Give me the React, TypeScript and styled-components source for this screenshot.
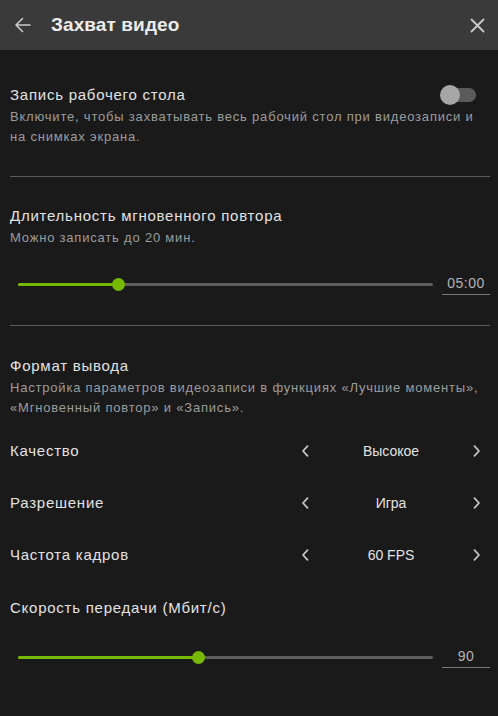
import styled, { createGlobalStyle } from "styled-components";

const GlobalStyle = createGlobalStyle`
  html, body {
    margin: 0;
    padding: 0;
    background: #1a1a1a;
  }
  body {
    font-family: "Liberation Sans", Arial, sans-serif;
    color: #e2e2e2;
  }
  * { box-sizing: border-box; }
`;

const Page = styled.div`
  width: 498px;
  height: 716px;
  background: #1a1a1a;
  overflow: hidden;
`;

const Header = styled.header`
  height: 50px;
  background: #3a3a3a;
  display: flex;
  align-items: center;
  padding: 0 13px 0 14px;
`;

const IconButton = styled.button`
  background: none;
  border: 0;
  padding: 0;
  display: flex;
  align-items: center;
  justify-content: center;
  color: #c9c9c9;
  cursor: pointer;
`;

const Title = styled.h1`
  flex: 1;
  margin: 0 0 0 20px;
  font-size: 19px;
  font-weight: 700;
  color: #ececec;
  letter-spacing: 0.1px;
`;

const Content = styled.main`
  padding: 5px 8px 0 10px;
`;

const Section = styled.section<{ $divider?: boolean; $top?: number }>`
  padding: ${(p) => p.$top ?? 29}px 0 ${(p) => (p.$divider ? "29px" : "0")};
  border-bottom: ${(p) => (p.$divider ? "1px solid #5c5c5c" : "none")};
`;

const HeadRow = styled.div`
  display: flex;
  align-items: center;
  justify-content: space-between;
`;

const Label = styled.div<{ $top?: number }>`
  margin-top: ${(p) => p.$top ?? 0}px;
  font-size: 15px;
  line-height: 20px;
  letter-spacing: 0.75px;
  color: #e2e2e2;
`;

const Description = styled.p`
  margin: 2px 0 0;
  font-size: 13px;
  line-height: 20px;
  letter-spacing: 0.8px;
  color: #9c9c9c;
`;

const Toggle = styled.div`
  position: relative;
  width: 36px;
  height: 20px;
  margin-right: 14px;
  margin-top: 1px;
  &::before {
    content: "";
    position: absolute;
    left: 10px;
    right: 0;
    top: 3px;
    height: 14px;
    border-radius: 7px;
    background: #5a5a5a;
  }
  &::after {
    content: "";
    position: absolute;
    left: 0;
    top: 0;
    width: 20px;
    height: 20px;
    border-radius: 50%;
    background: #a6a6a6;
  }
`;

const SliderRow = styled.div<{ $top: number }>`
  display: flex;
  align-items: center;
  height: 24px;
  margin-top: ${(p) => p.$top}px;
  padding-left: 8px;
`;

const Track = styled.div`
  position: relative;
  flex: 1;
  height: 3px;
  background: #5e5e5e;
  border-radius: 2px;
`;

const Fill = styled.div`
  position: absolute;
  left: 0;
  top: 0;
  bottom: 0;
  background: #76b900;
  border-radius: 2px;
`;

const Thumb = styled.div`
  position: absolute;
  top: 50%;
  width: 13px;
  height: 13px;
  margin: -6.5px 0 0 -6.5px;
  border-radius: 50%;
  background: #76b900;
`;

const ValueBox = styled.div`
  width: 48px;
  margin-left: 9px;
  height: 24px;
  line-height: 24px;
  text-align: center;
  font-size: 14px;
  letter-spacing: 0.5px;
  color: #b4b4b4;
  border-bottom: 1px solid #7a7a7a;
  transform: translateY(-1px);
`;

const OptionList = styled.div`
  margin-top: 7px;
`;

const OptionRow = styled.div`
  display: flex;
  align-items: center;
  justify-content: space-between;
  height: 52px;
`;

const Selector = styled.div`
  display: grid;
  grid-template-columns: 16px 1fr 16px;
  align-items: center;
  width: 188px;
  margin-right: 5px;
`;

const Arrow = styled.button`
  background: none;
  border: 0;
  padding: 0;
  height: 20px;
  display: flex;
  align-items: center;
  justify-content: center;
  color: #c4c4c4;
`;

const SelectValue = styled.span`
  text-align: center;
  font-size: 14px;
  color: #e2e2e2;
`;

const Chevron = ({ dir }: { dir: "left" | "right" }) => (
  <svg width="8" height="12" viewBox="0 0 8 12" fill="none">
    <path
      d={dir === "left" ? "M6.5 1.2 2 6l4.5 4.8" : "M1.5 1.2 6 6l-4.5 4.8"}
      stroke="currentColor"
      strokeWidth="1.8"
      strokeLinecap="round"
      strokeLinejoin="round"
    />
  </svg>
);

const Slider = ({ value, fraction, top }: { value: string; fraction: number; top: number }) => (
  <SliderRow $top={top}>
    <Track>
      <Fill style={{ width: `${fraction * 100}%` }} />
      <Thumb style={{ left: `${fraction * 100}%` }} />
    </Track>
    <ValueBox>{value}</ValueBox>
  </SliderRow>
);

const options = [
  { label: "Качество", value: "Высокое" },
  { label: "Разрешение", value: "Игра" },
  { label: "Частота кадров", value: "60 FPS" },
];

// неразрывный пробел после предлога, как в оригинале перенос идёт перед «на»
const desktopHint =
  "Включите, чтобы захватывать весь рабочий стол при видеозаписи и на\u00a0снимках экрана.";

export default function App() {
  return (
    <Page>
      <GlobalStyle />
      <Header>
        <IconButton aria-label="Назад">
          <svg width="17" height="16" viewBox="0 0 17 16" fill="none">
            <path
              d="M16 8H2M8.5 1.5 2 8l6.5 6.5"
              stroke="currentColor"
              strokeWidth="1.6"
              strokeLinecap="round"
              strokeLinejoin="round"
            />
          </svg>
        </IconButton>
        <Title>Захват видео</Title>
        <IconButton aria-label="Закрыть">
          <svg width="15" height="15" viewBox="0 0 15 15" fill="none">
            <path d="M1.5 1.5l12 12M13.5 1.5l-12 12" stroke="currentColor" strokeWidth="1.8" strokeLinecap="round" />
          </svg>
        </IconButton>
      </Header>
      <Content>
        <Section $divider>
          <HeadRow>
            <Label>Запись рабочего стола</Label>
            <Toggle />
          </HeadRow>
          <Description>{desktopHint}</Description>
        </Section>

        <Section $divider>
          <Label>Длительность мгновенного повтора</Label>
          <Description>Можно записать до 20 мин.</Description>
          <Slider value="05:00" fraction={0.243} top={24} />
        </Section>

        <Section $top={30}>
          <Label>Формат вывода</Label>
          <Description>
            Настройка параметров видеозаписи в функциях «Лучшие моменты», «Мгновенный повтор» и «Запись».
          </Description>
          <OptionList>
            {options.map((o) => (
              <OptionRow key={o.label}>
                <Label>{o.label}</Label>
                <Selector>
                  <Arrow aria-label="Предыдущее">
                    <Chevron dir="left" />
                  </Arrow>
                  <SelectValue>{o.value}</SelectValue>
                  <Arrow aria-label="Следующее">
                    <Chevron dir="right" />
                  </Arrow>
                </Selector>
              </OptionRow>
            ))}
          </OptionList>
          <Label $top={17}>Скорость передачи (Мбит/с)</Label>
          <Slider value="90" fraction={0.436} top={27} />
        </Section>
      </Content>
    </Page>
  );
}
